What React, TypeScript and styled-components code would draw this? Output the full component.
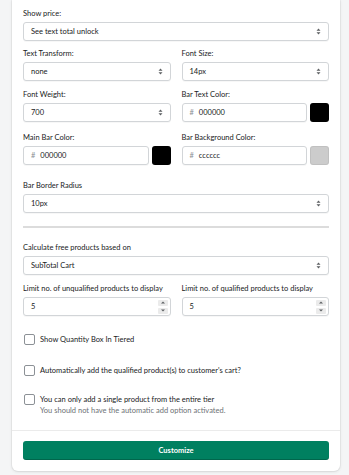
import React from "react"
import styled, { createGlobalStyle } from "styled-components"

const GlobalStyle = createGlobalStyle`
  html, body {
    margin: 0;
    padding: 0;
    background: #f4f5f6;
  }
  body {
    font-family: "Lato", "Liberation Sans", sans-serif;
    font-size: 7.5px;
    color: #202223;
  }
  * {
    box-sizing: border-box;
  }
`

const Page = styled.div`
  padding: 0 9px 3px 12px;
`

const Card = styled.div`
  background: #ffffff;
  border-radius: 0 0 6px 6px;
  box-shadow: 0 0 0 1px rgba(63, 63, 68, 0.05), 0 1px 3px rgba(63, 63, 68, 0.12);
`

const Body = styled.div`
  display: flex;
  flex-direction: column;
  padding: 9px 11px 14px 11px;
`

const Block = styled.div<{ $mt?: number }>`
  margin-top: ${(p) => p.$mt ?? 0}px;
`

const Row = styled.div<{ $mt?: number }>`
  display: grid;
  grid-template-columns: 1fr 1fr;
  column-gap: 11px;
  margin-top: ${(p) => p.$mt ?? 0}px;
`

const Label = styled.div`
  line-height: 10px;
  margin-bottom: 3px;
  white-space: nowrap;
`

const Control = styled.div`
  display: flex;
  align-items: center;
  height: 19px;
  padding: 0 7px;
  background: #ffffff;
  border: 1px solid #d2d5d8;
  border-radius: 3px;
  box-shadow: 0 1px 0 rgba(0, 0, 0, 0.03);
  line-height: 10px;
`

const Value = styled.span`
  flex: 1;
  white-space: nowrap;
`

const Hash = styled.span`
  color: #8c9196;
  margin-right: 5px;
`

const ColorLine = styled.div`
  display: flex;
  gap: 3px;
  & > ${Control} {
    flex: 1;
  }
`

const Swatch = styled.div<{ $color: string }>`
  width: 19px;
  height: 19px;
  border-radius: 3px;
  background: ${(p) => p.$color};
  box-shadow: inset 0 0 0 1px rgba(0, 0, 0, 0.06);
`

const Divider = styled.hr`
  margin: 13px 0 0;
  border: 0;
  border-top: 2px solid #dcdcdc;
`

const Spinner = styled.div`
  display: flex;
  flex-direction: column;
  gap: 2px;
  margin-right: -5px;
`

const SpinBtn = styled.div`
  width: 10px;
  height: 6px;
  display: flex;
  align-items: center;
  justify-content: center;
  background: #ebebeb;
  border-radius: 1px;
`

const CheckRow = styled.label<{ $mt: number }>`
  display: flex;
  align-items: center;
  gap: 5px;
  margin-top: ${(p) => p.$mt}px;
  line-height: 11px;
  padding-left: 1px;
`

const Box = styled.span`
  width: 11px;
  height: 11px;
  border: 1px solid #8c9196;
  border-radius: 2px;
  flex: none;
`

const Help = styled.div`
  color: #6d7175;
  line-height: 10px;
  margin-top: 1px;
  padding-left: 17px;
`

const Footer = styled.div`
  border-top: 1px solid #ebebeb;
  padding: 10px 11px 11px;
`

const Button = styled.button`
  display: block;
  width: 100%;
  height: 19px;
  border: 0;
  border-radius: 3px;
  background: #008060;
  color: #ffffff;
  font-family: inherit;
  font-size: 7.5px;
  font-weight: 700;
  box-shadow: inset 0 -1px 0 rgba(0, 0, 0, 0.2);
`

const UpDown = () => (
  <svg width="5" height="7" viewBox="0 0 5 7">
    <path d="M2.5 0.5 L4.5 2.7 H0.5 Z M2.5 6.5 L0.5 4.3 H4.5 Z" fill="#5c5f62" />
  </svg>
)

const Tri = ({ down }: { down?: boolean }) => (
  <svg width="4" height="3" viewBox="0 0 4 3">
    <path d={down ? "M0 0.5 H4 L2 2.5 Z" : "M0 2.5 H4 L2 0.5 Z"} fill="#5c5f62" />
  </svg>
)

const Select = ({ value, arrows = true }: { value: string; arrows?: boolean }) => (
  <Control>
    <Value>{value}</Value>
    {arrows && <UpDown />}
  </Control>
)

const ColorField = ({ label, hex, color }: { label: string; hex: string; color: string }) => (
  <div>
    <Label>{label}</Label>
    <ColorLine>
      <Control>
        <Hash>#</Hash>
        <Value>{hex}</Value>
      </Control>
      <Swatch $color={color} />
    </ColorLine>
  </div>
)

const NumberField = ({ label, value }: { label: string; value: string }) => (
  <div>
    <Label>{label}</Label>
    <Control>
      <Value>{value}</Value>
      <Spinner>
        <SpinBtn>
          <Tri />
        </SpinBtn>
        <SpinBtn>
          <Tri down />
        </SpinBtn>
      </Spinner>
    </Control>
  </div>
)

export default function App() {
  return (
    <Page>
      <GlobalStyle />
      <Card>
        <Body>
          <Block>
            <Label>Show price:</Label>
            <Select value="See text total unlock" />
          </Block>
          <Row $mt={8}>
            <div>
              <Label>Text Transform:</Label>
              <Select value="none" />
            </div>
            <div>
              <Label>Font Size:</Label>
              <Select value="14px" />
            </div>
          </Row>
          <Row $mt={9}>
            <div>
              <Label>Font Weight:</Label>
              <Select value="700" />
            </div>
            <ColorField label="Bar Text Color:" hex="000000" color="#000000" />
          </Row>
          <Row $mt={11}>
            <ColorField label="Main Bar Color:" hex="000000" color="#000000" />
            <ColorField label="Bar Background Color:" hex="cccccc" color="#cccccc" />
          </Row>
          <Block $mt={16}>
            <Label>Bar Border Radius</Label>
            <Select value="10px" />
          </Block>
          <Divider />
          <Block $mt={15}>
            <Label>Calculate free products based on</Label>
            <Select value="SubTotal Cart" />
          </Block>
          <Row $mt={9}>
            <NumberField label="Limit no. of unqualified products to display" value="5" />
            <NumberField label="Limit no. of qualified products to display" value="5" />
          </Row>
          <CheckRow $mt={18}>
            <Box />
            Show Quantity Box In Tiered
          </CheckRow>
          <CheckRow $mt={20}>
            <Box />
            Automatically add the qualified product(s) to customer's cart?
          </CheckRow>
          <CheckRow $mt={18}>
            <Box />
            You can only add a single product from the entire tier
          </CheckRow>
          <Help>You should not have the automatic add option activated.</Help>
        </Body>
        <Footer>
          <Button>Customize</Button>
        </Footer>
      </Card>
    </Page>
  )
}
